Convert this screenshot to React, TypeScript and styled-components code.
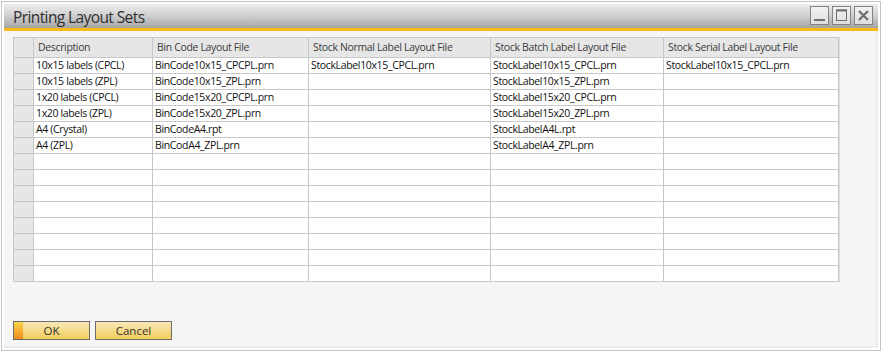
import styled, { createGlobalStyle } from 'styled-components';
import { Fragment } from 'react';

const GlobalStyle = createGlobalStyle`
	html, body {
		margin: 0;
		padding: 0;
		background: #ffffff;
	}
	* {
		box-sizing: border-box;
	}
`;

type Row = {
	description: string;
	binCode: string;
	normal: string;
	batch: string;
	serial: string;
};

const rows: Row[] = [
	{
		description: '10x15 labels (CPCL)',
		binCode: 'BinCode10x15_CPCPL.prn',
		normal: 'StockLabel10x15_CPCL.prn',
		batch: 'StockLabel10x15_CPCL.prn',
		serial: 'StockLabel10x15_CPCL.prn',
	},
	{
		description: '10x15 labels (ZPL)',
		binCode: 'BinCode10x15_ZPL.prn',
		normal: '',
		batch: 'StockLabel10x15_ZPL.prn',
		serial: '',
	},
	{
		description: '1x20 labels (CPCL)',
		binCode: 'BinCode15x20_CPCPL.prn',
		normal: '',
		batch: 'StockLabel15x20_CPCL.prn',
		serial: '',
	},
	{
		description: '1x20 labels (ZPL)',
		binCode: 'BinCode15x20_ZPL.prn',
		normal: '',
		batch: 'StockLabel15x20_ZPL.prn',
		serial: '',
	},
	{
		description: 'A4 (Crystal)',
		binCode: 'BinCodeA4.rpt',
		normal: '',
		batch: 'StockLabelA4L.rpt',
		serial: '',
	},
	{
		description: 'A4 (ZPL)',
		binCode: 'BinCodA4_ZPL.prn',
		normal: '',
		batch: 'StockLabelA4_ZPL.prn',
		serial: '',
	},
];

const TOTAL_ROWS = 14;

const headers = [
	'Description',
	'Bin Code Layout File',
	'Stock Normal Label Layout File',
	'Stock Batch Label Layout File',
	'Stock Serial Label Layout File',
];

const Frame = styled.div`
	width: 880px;
	height: 350px;
	margin: 1px 0 0 1px;
	border: 1px solid #c2c2c2;
	padding: 2px;
	background: #ffffff;
	display: flex;
	flex-direction: column;
`;

const TitleBar = styled.header`
	height: 27px;
	display: flex;
	align-items: center;
	justify-content: space-between;
	padding: 0 5px 0 9px;
	background: linear-gradient(#ececec 0%, #d2d2d2 45%, #a4a4a4 100%);
	border-bottom: 3px solid #fcb814;
`;

const Title = styled.h1`
	margin: 0;
	font-family: 'Open Sans', 'Noto Sans', sans-serif;
	font-weight: 400;
	font-size: 15.5px;
	letter-spacing: -0.6px;
	color: #2e2e2e;
	padding-top: 2px;
`;

const WindowButtons = styled.div`
	display: flex;
	gap: 3px;
	align-self: flex-start;
	margin-top: 2px;
`;

const WindowButton = styled.button`
	width: 19px;
	height: 19px;
	padding: 0;
	border: 1px solid #838383;
	background: linear-gradient(#f2f2f2, #dedede);
	display: flex;
	align-items: center;
	justify-content: center;
`;

const Content = styled.main`
	flex: 1;
	background: #f5f5f5;
	border-right: 2px solid #ededed;
	border-bottom: 2px solid #ededed;
	padding: 6px 0 0 9px;
	display: flex;
	flex-direction: column;
	align-items: flex-start;
`;

const Grid = styled.div`
	display: grid;
	grid-template-columns: 20px 119px 156px 182px 173px 175px;
	grid-template-rows: 20px;
	grid-auto-rows: 16px;
	border-top: 1px solid #c8c8c8;
	border-left: 1px solid #c8c8c8;
	box-shadow: 1px 0 0 #dcdcdc;
	background: #ffffff;
`;

const Cell = styled.div<{ $head?: boolean; $shade?: boolean }>`
	border-right: 1px solid #c8c8c8;
	border-bottom: 1px solid #c8c8c8;
	background: ${(p) => (p.$shade || p.$head ? '#e6e6e6' : '#ffffff')};
	font-family: 'Open Sans', 'Noto Sans', sans-serif;
	font-size: 10.5px;
	letter-spacing: -0.35px;
	line-height: ${(p) => (p.$head ? '18px' : '15px')};
	padding-left: ${(p) => (p.$head ? '4px' : '2px')};
	color: ${(p) => (p.$head ? '#3c3c3c' : '#111111')};
	white-space: nowrap;
	overflow: hidden;
`;

const ButtonRow = styled.div`
	display: flex;
	gap: 5px;
	margin-top: 39px;
`;

const ActionButton = styled.button<{ $primary?: boolean }>`
	width: 77px;
	height: 19px;
	padding: 0;
	border: 1px solid #6d6d6d;
	background: ${(p) =>
		p.$primary
			? 'linear-gradient(to bottom, #fbd34c, #ef8c1c) left / 9px 100% no-repeat, linear-gradient(#f7e8b8, #f2cd5b)'
			: 'linear-gradient(#f7e8b8, #f2cd5b)'};
	font-family: 'Open Sans', 'Noto Sans', sans-serif;
	font-size: 11.5px;
	line-height: 17px;
	color: #333333;
`;

function MinimizeIcon() {
	return (
		<svg width="17" height="17" viewBox="0 0 17 17">
			<rect x="3" y="12" width="11" height="2" fill="#707070" />
		</svg>
	);
}

function MaximizeIcon() {
	return (
		<svg width="17" height="17" viewBox="0 0 17 17">
			<rect x="3.5" y="3" width="10" height="10.5" fill="none" stroke="#707070" strokeWidth="1" />
			<rect x="3" y="2.5" width="11" height="2" fill="#707070" />
		</svg>
	);
}

function CloseIcon() {
	return (
		<svg width="17" height="17" viewBox="0 0 17 17">
			<path d="M4 4 L13 13 M13 4 L4 13" stroke="#707070" strokeWidth="2.4" />
		</svg>
	);
}

export default function App() {
	const body: Row[] = Array.from({ length: TOTAL_ROWS }, (_, i) =>
		rows[i] ?? { description: '', binCode: '', normal: '', batch: '', serial: '' }
	);

	return (
		<>
			<GlobalStyle />
			<Frame>
				<TitleBar>
					<Title>Printing Layout Sets</Title>
					<WindowButtons>
						<WindowButton aria-label="Minimize">
							<MinimizeIcon />
						</WindowButton>
						<WindowButton aria-label="Maximize">
							<MaximizeIcon />
						</WindowButton>
						<WindowButton aria-label="Close">
							<CloseIcon />
						</WindowButton>
					</WindowButtons>
				</TitleBar>
				<Content>
					<Grid>
						<Cell $head />
						{headers.map((h) => (
							<Cell key={h} $head>
								{h}
							</Cell>
						))}
						{body.map((r, i) => (
							<Fragment key={i}>
								<Cell $shade />
								<Cell>{r.description}</Cell>
								<Cell>{r.binCode}</Cell>
								<Cell>{r.normal}</Cell>
								<Cell>{r.batch}</Cell>
								<Cell>{r.serial}</Cell>
							</Fragment>
						))}
					</Grid>
					<ButtonRow>
						<ActionButton $primary>OK</ActionButton>
						<ActionButton>Cancel</ActionButton>
					</ButtonRow>
				</Content>
			</Frame>
		</>
	);
}
